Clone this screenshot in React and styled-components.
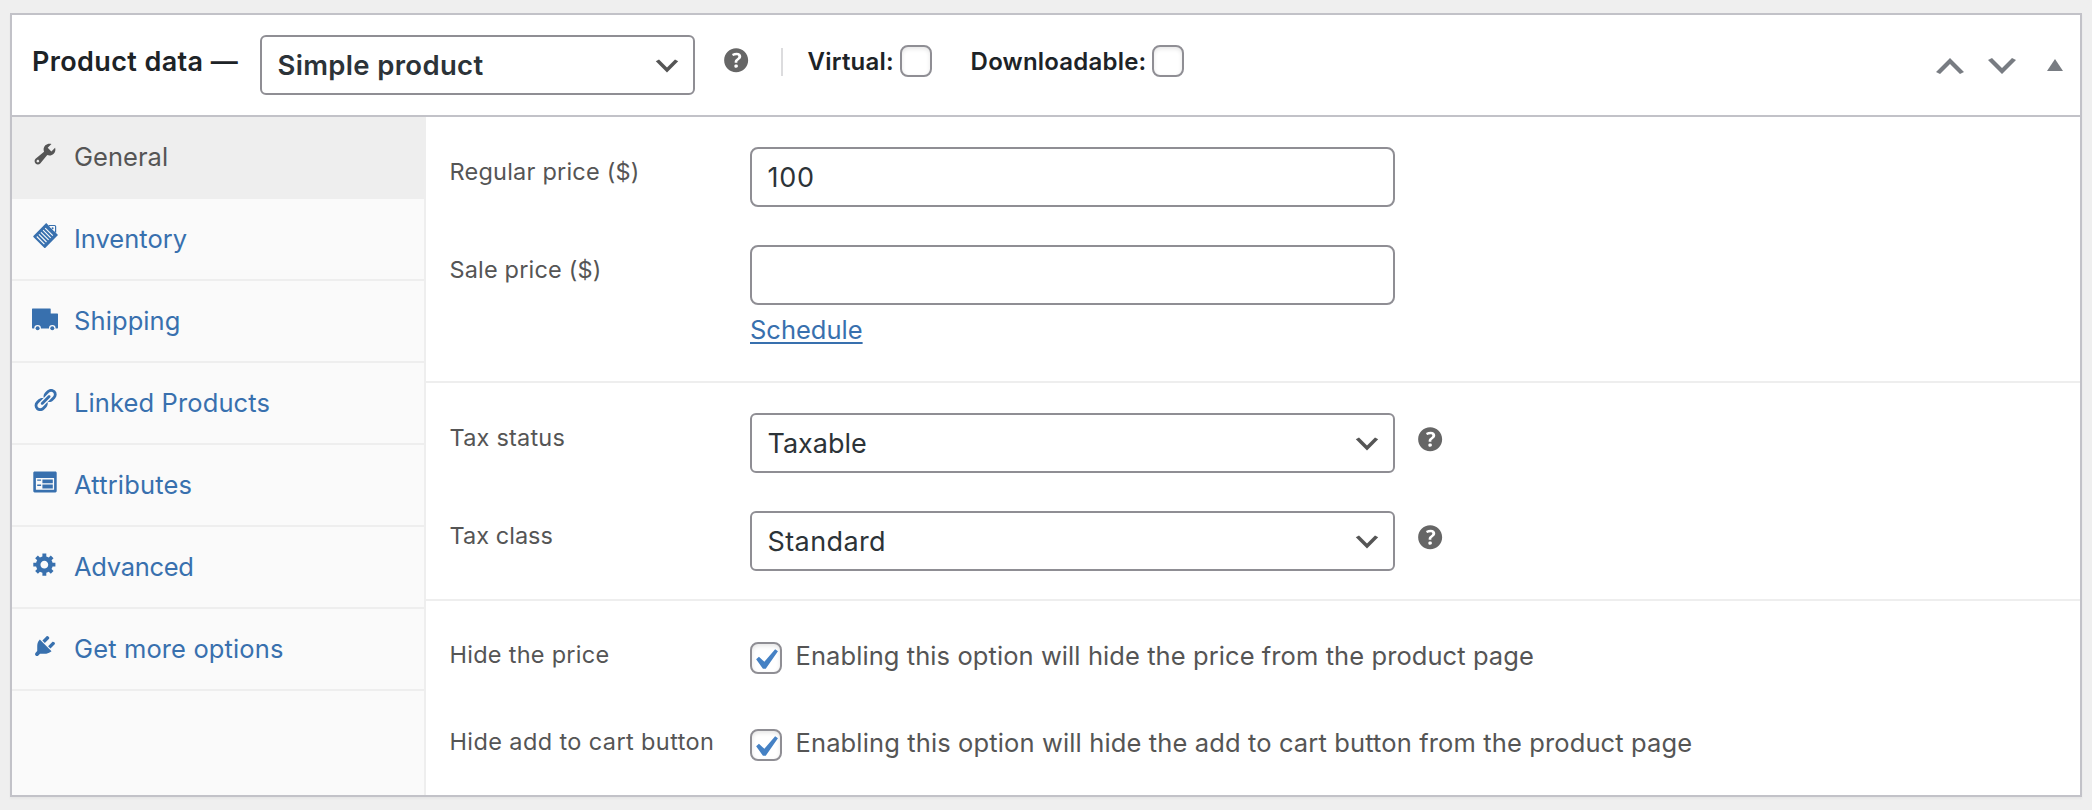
import React from "react";
import styled, { createGlobalStyle } from "styled-components";

const GlobalStyle = createGlobalStyle`
  *, *::before, *::after { box-sizing: border-box; }
  body {
    margin: 0;
    background: #efefef;
    font-family: Inter, "Liberation Sans", sans-serif;
    -webkit-font-smoothing: antialiased;
  }
`;

const Page = styled.main`
  height: 810px;
  padding: 13px 10px;
  overflow: hidden;
`;

const MetaBox = styled.section`
  display: flex;
  flex-direction: column;
  height: 784px;
  background: #fff;
  border: 2px solid #c2c2c8;
  box-shadow: 0 2px 2px rgba(0, 0, 0, 0.04);
`;

const Header = styled.header`
  display: flex;
  align-items: flex-start;
  height: 102px;
  flex: none;
  padding: 20px 17px 0 20px;
  border-bottom: 2px solid #c2c2c8;
`;

const Title = styled.h2`
  width: 228px;
  margin: 9px 0 0;
  font-size: 27px;
  line-height: 36px;
  font-weight: 600;
  letter-spacing: 0.38px;
  white-space: nowrap;
  color: #1d2327;
`;

const SelectBox = styled.div`
  display: flex;
  align-items: center;
  justify-content: space-between;
  width: ${(p) => p.$width}px;
  height: 60px;
  padding: 0 10px 0 15.5px;
  border: 2px solid #8f8e94;
  border-radius: 6px;
  background: #fff;
  color: #2c3338;
  font-size: ${(p) => (p.$bold ? 27.5 : 27)}px;
  font-weight: ${(p) => (p.$bold ? 600 : 400)};
  letter-spacing: ${(p) => p.$tracking}px;
`;

const SelectChevron = styled.svg`
  width: 32px;
  height: 32px;
  margin-top: 2px;
  fill: #555;
`;

const HelpIcon = styled.svg`
  flex: none;
  width: 34.3px;
  height: 34.3px;
  margin: ${(p) => p.$top}px 0 0 ${(p) => p.$left}px;
  fill: #666;
`;

const Separator = styled.span`
  width: 2px;
  height: 28px;
  margin: 13px 0 0 28px;
  background: #dcdcde;
`;

const TypeOption = styled.label`
  display: flex;
  align-items: flex-start;
  margin: 10px 0 0 ${(p) => p.$left}px;
  color: #1d2327;
`;

const TypeText = styled.span`
  width: ${(p) => p.$width}px;
  margin-top: 2px;
  font-size: 24px;
  line-height: 30px;
  font-weight: 600;
  letter-spacing: 0.2px;
  white-space: nowrap;
`;

const CheckFrame = styled.span`
  display: flex;
  align-items: center;
  justify-content: center;
  flex: none;
  width: 32px;
  height: 32px;
  border: 2px solid #8f8e94;
  border-radius: 8px;
  background: #fff;
  box-shadow: inset 0 2px 4px rgba(0, 0, 0, 0.1);
`;

const CheckMark = styled.svg`
  flex: none;
  width: 42px;
  height: 42px;
  margin: 3px 2px 0 0;
  fill: #4581c4;
`;

const Actions = styled.div`
  display: flex;
  gap: 12px;
  margin: 11px 0 0 auto;
`;

const ActionIcon = styled.svg`
  width: 40px;
  height: 40px;
  fill: #787c82;
`;

const ToggleIcon = styled.svg`
  width: 16px;
  height: 12px;
  margin: 12.5px 0 0 13px;
  fill: #787c82;
`;

const Body = styled.div`
  display: flex;
  flex: 1;
`;

const Tabs = styled.nav`
  width: 414px;
  flex: none;
  background: #fafafa;
  border-right: 2px solid #eee;
`;

const Tab = styled.a`
  display: flex;
  align-items: center;
  gap: 16px;
  height: 82px;
  padding-left: 20px;
  border-bottom: 2px solid #eee;
  background: ${(p) => (p.$active ? "#eee" : "transparent")};
  color: ${(p) => (p.$active ? "#555" : "#3870ae")};
  font-size: 25.5px;
  line-height: 36px;
  letter-spacing: ${(p) => p.$tracking}px;
`;

const TabIcon = styled.svg`
  width: 26px;
  height: 26px;
  margin-bottom: 7px;
  fill: currentColor;
  overflow: visible;
`;

const Panel = styled.div`
  flex: 1;
`;

const Group = styled.div`
  display: flex;
  flex-direction: column;
  gap: ${(p) => p.$gap}px;
  height: ${(p) => p.$height}px;
  padding: ${(p) => p.$top}px 0 0 23.5px;
  border-bottom: ${(p) => (p.$last ? "none" : "2px solid #eee")};
`;

const Row = styled.div`
  display: flex;
  align-items: flex-start;
`;

const RowLabel = styled.span`
  width: 300.5px;
  flex: none;
  margin-top: ${(p) => p.$top}px;
  color: #555;
  font-size: 23.5px;
  line-height: 36px;
  letter-spacing: ${(p) => p.$tracking}px;
  white-space: nowrap;
`;

const FieldColumn = styled.div`
  display: flex;
  flex-direction: column;
  align-items: flex-start;
`;

const TextInput = styled.input`
  width: 645px;
  height: 60px;
  padding: 0 15.5px;
  border: 2px solid #8f8e94;
  border-radius: 8px;
  background: #fff;
  color: #2c3338;
  font-family: inherit;
  font-size: 27px;
  letter-spacing: 0.7px;
  outline: none;
`;

const ScheduleLink = styled.a`
  margin-top: 7px;
  color: #3870ae;
  font-size: 25.5px;
  line-height: 36px;
  letter-spacing: 0;
  text-decoration: underline;
  text-decoration-thickness: 2px;
  text-underline-offset: 3px;
`;

const OptionText = styled.span`
  margin: -4px 0 0 13.5px;
  color: #555;
  font-size: 25.5px;
  line-height: 36px;
  letter-spacing: ${(p) => p.$tracking}px;
  white-space: nowrap;
`;

const HELP_PATH =
  "M17 10c0-3.87-3.14-7-7-7-3.87 0-7 3.13-7 7s3.13 7 7 7c3.86 0 7-3.13 7-7zm-6.3 1.48H9.14v-.43c0-.38.08-.7.24-.98s.46-.57.88-.89c.41-.29.68-.53.81-.71.14-.18.2-.39.2-.62 0-.25-.09-.44-.28-.58-.19-.13-.45-.19-.79-.19-.58 0-1.25.19-2 .57l-.64-1.28c.87-.49 1.8-.74 2.77-.74.81 0 1.45.2 1.92.58.48.39.71.91.71 1.55 0 .43-.09.8-.29 1.11-.19.32-.57.67-1.11 1.06-.38.28-.61.49-.71.63-.1.15-.15.34-.15.57v.35zm-1.47 2.74c-.18-.17-.27-.42-.27-.73 0-.33.08-.58.26-.75s.43-.25.77-.25c.32 0 .57.09.75.26s.27.42.27.74c0 .3-.09.55-.27.72-.18.18-.43.27-.75.27-.33 0-.58-.09-.76-.26z";

function Help({ top, left }) {
  return (
    <HelpIcon viewBox="0 0 20 20" $top={top} $left={left}>
      <path d={HELP_PATH} />
    </HelpIcon>
  );
}

function Select({ children, width = 645, bold, tracking }) {
  return (
    <SelectBox $width={width} $bold={bold} $tracking={tracking}>
      {children}
      <SelectChevron viewBox="0 0 20 20">
        <path d="M5 6l5 5 5-5 2 1-7 7-7-7 2-1z" />
      </SelectChevron>
    </SelectBox>
  );
}

function Checkbox({ checked }) {
  return (
    <CheckFrame role="checkbox" aria-checked={!!checked}>
      {checked && (
        <CheckMark viewBox="0 0 20 20">
          <path d="M14.83 4.89l1.34.94-5.81 8.38H9.02L5.78 9.67l1.34-1.25 2.57 2.4z" />
        </CheckMark>
      )}
    </CheckFrame>
  );
}

const WrenchIcon = () => (
  <TabIcon viewBox="0 0 20 20">
    <path d="M16.68 9.77c-1.34 1.34-3.3 1.67-4.95.99l-5.41 6.52c-.99.99-2.59.99-3.58 0s-.99-2.59 0-3.57l6.52-5.42c-.68-1.65-.35-3.61.99-4.95 1.28-1.28 3.12-1.62 4.72-1.06l-2.89 2.89 2.82 2.82 2.86-2.87c.53 1.58.18 3.39-1.08 4.65zM3.81 16.21c.4.39 1.04.39 1.43 0 .4-.4.4-1.04 0-1.43-.39-.4-1.03-.4-1.43 0-.39.39-.39 1.03 0 1.43z" />
  </TabIcon>
);

const InventoryIcon = () => (
  <TabIcon viewBox="0 0 26 26">
    <path d="M14.2.1L26 11.9 13.2 24.9q-.4.4-.8 0L1.4 13.9q-.4-.4 0-.8z" />
    <path d="M17 2.5h5.6q1 0 1 1v6" fill="none" stroke="currentColor" strokeWidth="1.2" />
    <path d="M17.3 3.4h5.2v5.2z" fill="#fafafa" />
    <circle cx="20.6" cy="5.3" r="1" />
    <g stroke="#fafafa" strokeWidth="1.15">
      <path d="M4.8 13.5l7.6 7.6M6.9 11.4l7.6 7.6M9 9.3l7.6 7.6M11.1 7.2l7.6 7.6M13.2 5.1l7.6 7.6" />
    </g>
  </TabIcon>
);

const TruckIcon = () => (
  <TabIcon viewBox="0 0 26 26">
    <path d="M.6 3.4h17.5q.6 0 .6.6v4.6h6.7q.6 0 .6.6v13.6q0 .6-.6.6H.6q-.6 0-.6-.6V4q0-.6.6-.6z" />
    <circle cx="5.6" cy="23.2" r="3.3" fill="#fafafa" />
    <circle cx="20.3" cy="23.2" r="3.3" fill="#fafafa" />
    <circle cx="5.6" cy="23.2" r="2" />
    <circle cx="20.3" cy="23.2" r="2" />
  </TabIcon>
);

const LinkIcon = () => (
  <TabIcon viewBox="0 0 20 20">
    <path d="M17.74 2.76c1.68 1.69 1.68 4.41 0 6.1l-1.53 1.52c-1.12 1.12-2.7 1.47-4.14 1.09l2.62-2.61.76-.77.76-.76c.84-.84.84-2.2 0-3.04-.84-.85-2.2-.85-3.04 0l-.77.76-3.38 3.38c-.37-1.44-.02-3.02 1.1-4.14l1.52-1.53c1.69-1.68 4.42-1.68 6.1 0zM8.59 13.43l5.34-5.34c.42-.42.42-1.1 0-1.52-.44-.43-1.13-.39-1.53 0l-5.33 5.34c-.42.42-.42 1.1 0 1.52.44.43 1.13.39 1.52 0zm-.76 2.29l4.14-4.15c.38 1.44.03 3.02-1.09 4.14l-1.52 1.53c-1.69 1.68-4.41 1.68-6.1 0-1.68-1.68-1.68-4.42 0-6.1l1.53-1.52c1.12-1.12 2.7-1.47 4.14-1.1l-4.14 4.15c-.85.84-.85 2.2 0 3.05.84.84 2.2.84 3.04 0z" />
  </TabIcon>
);

const AttributesIcon = () => (
  <TabIcon viewBox="0 0 20 20">
    <path d="M2 2h16c.55 0 1 .45 1 1v14c0 .55-.45 1-1 1H2c-.55 0-1-.45-1-1V3c0-.55.45-1 1-1zm15 14V7H3v9h14zM4 8v1h3V8H4zm4 0v3h8V8H8zm-4 4v1h3v-1H4zm4 0v3h8v-3H8z" />
  </TabIcon>
);

const GearIcon = () => (
  <TabIcon viewBox="0 0 20 20">
    <path d="M18 12h-2.18c-.17.7-.44 1.35-.81 1.93l1.54 1.54-2.1 2.1-1.54-1.54c-.58.36-1.23.63-1.91.79V19H8v-2.18c-.68-.16-1.33-.43-1.91-.79l-1.54 1.54-2.12-2.12 1.54-1.54c-.36-.58-.63-1.23-.79-1.91H1V9.03h2.17c.16-.7.44-1.35.8-1.94L2.43 5.55l2.1-2.1 1.54 1.54c.58-.37 1.24-.64 1.93-.81V2h3v2.18c.68.16 1.33.43 1.91.79l1.54-1.54 2.12 2.12-1.54 1.54c.36.59.64 1.24.8 1.94H18V12zm-8.5 1.5c1.66 0 3-1.34 3-3s-1.34-3-3-3-3 1.34-3 3 1.34 3 3 3z" />
  </TabIcon>
);

const PlugIcon = () => (
  <TabIcon viewBox="0 0 20 20">
    <path d="M13.11 4.36L9.87 7.6 8 5.73l3.24-3.24c.35-.34 1.05-.2 1.56.32.52.51.66 1.21.31 1.55zm-8 1.77l.91-1.12 9.01 9.01-1.19.84c-.71.71-2.63 1.16-3.82 1.16H6.14L4.9 17.26c-.59.59-1.54.59-2.12 0-.59-.58-.59-1.53 0-2.12l1.24-1.24v-3.88c0-1.13.4-3.19 1.09-3.89zm7.26 3.97l3.24-3.24c.34-.35 1.04-.21 1.55.31.52.51.66 1.21.31 1.55l-3.24 3.25z" />
  </TabIcon>
);

const TABS = [
  { label: "General", Icon: WrenchIcon, active: true, tracking: 0.04 },
  { label: "Inventory", Icon: InventoryIcon, tracking: 0 },
  { label: "Shipping", Icon: TruckIcon, tracking: 0.1 },
  { label: "Linked Products", Icon: LinkIcon, tracking: 0.12 },
  { label: "Attributes", Icon: AttributesIcon, tracking: 0.17 },
  { label: "Advanced", Icon: GearIcon, tracking: -0.3 },
  { label: "Get more options", Icon: PlugIcon, tracking: 0.13 },
];

export default function App() {
  return (
    <Page>
      <GlobalStyle />
      <MetaBox>
        <Header>
          <Title>Product data —</Title>
          <Select width={435} bold tracking={0.33}>Simple product</Select>
          <Help top={7.8} left={23.8} />
          <Separator />
          <TypeOption $left={24.5}>
            <TypeText $width={92.5}>Virtual:</TypeText>
            <Checkbox />
          </TypeOption>
          <TypeOption $left={38.5}>
            <TypeText $width={181.5}>Downloadable:</TypeText>
            <Checkbox />
          </TypeOption>
          <Actions>
            <ActionIcon viewBox="0 0 20 20">
              <path d="M15 14l-5-5-5 5-2-1 7-7 7 7z" />
            </ActionIcon>
            <ActionIcon viewBox="0 0 20 20">
              <path d="M5 6l5 5 5-5 2 1-7 7-7-7z" />
            </ActionIcon>
            <ToggleIcon viewBox="0 0 16 12">
              <path d="M8 0l8 12H0z" />
            </ToggleIcon>
          </Actions>
        </Header>
        <Body>
          <Tabs>
            {TABS.map(({ label, Icon, active, tracking }) => (
              <Tab key={label} $active={active} $tracking={tracking}>
                <Icon />
                {label}
              </Tab>
            ))}
          </Tabs>
          <Panel>
            <Group $gap={38} $height={266} $top={30}>
              <Row>
                <RowLabel $top={6.5} $tracking={0.22}>Regular price ($)</RowLabel>
                <TextInput defaultValue="100" />
              </Row>
              <Row>
                <RowLabel $top={6.5} $tracking={0.17}>Sale price ($)</RowLabel>
                <FieldColumn>
                  <TextInput />
                  <ScheduleLink>Schedule</ScheduleLink>
                </FieldColumn>
              </Row>
            </Group>
            <Group $gap={38} $height={218} $top={30}>
              <Row>
                <RowLabel $top={6.5} $tracking={0.21}>Tax status</RowLabel>
                <Select tracking={0}>Taxable</Select>
                <Help top={8.8} left={17.5} />
              </Row>
              <Row>
                <RowLabel $top={6.5} $tracking={0.03}>Tax class</RowLabel>
                <Select tracking={0.4}>Standard</Select>
                <Help top={8.8} left={17.5} />
              </Row>
            </Group>
            <Group $gap={55} $height={194} $top={41} $last>
              <Row>
                <RowLabel $top={-5} $tracking={0.27}>Hide the price</RowLabel>
                <Checkbox checked />
                <OptionText $tracking={0.08}>
                  Enabling this option will hide the price from the product page
                </OptionText>
              </Row>
              <Row>
                <RowLabel $top={-5} $tracking={0.39}>Hide add to cart button</RowLabel>
                <Checkbox checked />
                <OptionText $tracking={0.13}>
                  Enabling this option will hide the add to cart button from the product page
                </OptionText>
              </Row>
            </Group>
          </Panel>
        </Body>
      </MetaBox>
    </Page>
  );
}
